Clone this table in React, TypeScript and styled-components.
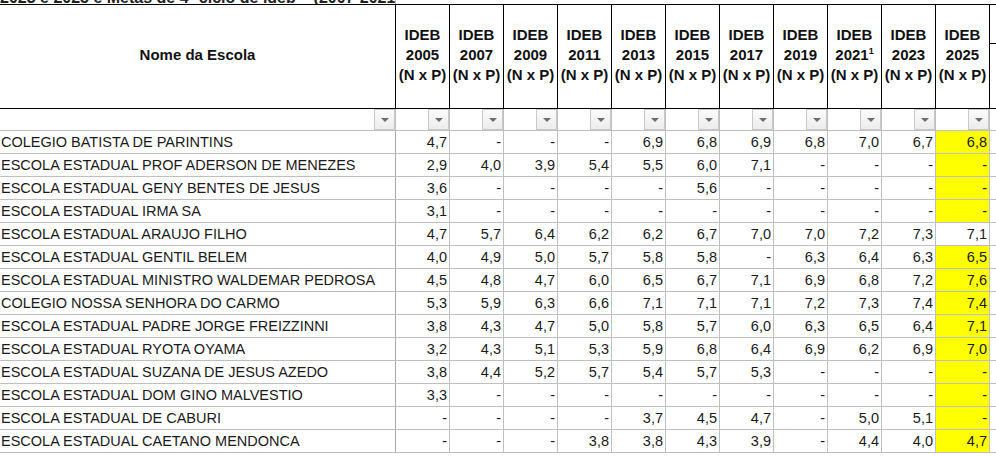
import React from "react";
import styled, { createGlobalStyle } from "styled-components";

const GlobalStyle = createGlobalStyle`
  html, body {
    margin: 0;
    padding: 0;
    background: #ffffff;
    overflow: hidden;
  }
  body {
    font-family: "Liberation Sans", Arial, sans-serif;
  }
`;

const YEARS = ["2005", "2007", "2009", "2011", "2013", "2015", "2017", "2019", "2021", "2023", "2025"];

type Row = { name: string; values: string[]; hl: boolean };

const ROWS: Row[] = [
  { name: "COLEGIO BATISTA DE PARINTINS", values: ["4,7", "-", "-", "-", "6,9", "6,8", "6,9", "6,8", "7,0", "6,7", "6,8"], hl: true },
  { name: "ESCOLA ESTADUAL PROF ADERSON DE MENEZES", values: ["2,9", "4,0", "3,9", "5,4", "5,5", "6,0", "7,1", "-", "-", "-", "-"], hl: true },
  { name: "ESCOLA ESTADUAL GENY BENTES DE JESUS", values: ["3,6", "-", "-", "-", "-", "5,6", "-", "-", "-", "-", "-"], hl: true },
  { name: "ESCOLA ESTADUAL IRMA SA", values: ["3,1", "-", "-", "-", "-", "-", "-", "-", "-", "-", "-"], hl: true },
  { name: "ESCOLA ESTADUAL ARAUJO FILHO", values: ["4,7", "5,7", "6,4", "6,2", "6,2", "6,7", "7,0", "7,0", "7,2", "7,3", "7,1"], hl: false },
  { name: "ESCOLA ESTADUAL GENTIL BELEM", values: ["4,0", "4,9", "5,0", "5,7", "5,8", "5,8", "-", "6,3", "6,4", "6,3", "6,5"], hl: true },
  { name: "ESCOLA ESTADUAL MINISTRO WALDEMAR PEDROSA", values: ["4,5", "4,8", "4,7", "6,0", "6,5", "6,7", "7,1", "6,9", "6,8", "7,2", "7,6"], hl: true },
  { name: "COLEGIO NOSSA SENHORA DO CARMO", values: ["5,3", "5,9", "6,3", "6,6", "7,1", "7,1", "7,1", "7,2", "7,3", "7,4", "7,4"], hl: true },
  { name: "ESCOLA ESTADUAL PADRE JORGE FREIZZINNI", values: ["3,8", "4,3", "4,7", "5,0", "5,8", "5,7", "6,0", "6,3", "6,5", "6,4", "7,1"], hl: true },
  { name: "ESCOLA ESTADUAL RYOTA OYAMA", values: ["3,2", "4,3", "5,1", "5,3", "5,9", "6,8", "6,4", "6,9", "6,2", "6,9", "7,0"], hl: true },
  { name: "ESCOLA ESTADUAL SUZANA DE JESUS AZEDO", values: ["3,8", "4,4", "5,2", "5,7", "5,4", "5,7", "5,3", "-", "-", "-", "-"], hl: true },
  { name: "ESCOLA ESTADUAL DOM GINO MALVESTIO", values: ["3,3", "-", "-", "-", "-", "-", "-", "-", "-", "-", "-"], hl: true },
  { name: "ESCOLA ESTADUAL DE CABURI", values: ["-", "-", "-", "-", "3,7", "4,5", "4,7", "-", "5,0", "5,1", "-"], hl: true },
  { name: "ESCOLA ESTADUAL CAETANO MENDONCA", values: ["-", "-", "-", "3,8", "3,8", "4,3", "3,9", "-", "4,4", "4,0", "4,7"], hl: true },
];

const GRID = "#bfbfbf";

const Sheet = styled.div`
  display: grid;
  grid-template-columns: 396px repeat(11, 54px) 1fr;
  grid-template-rows: 4px 105px 22px repeat(14, 23px) 1fr;
  width: 996px;
  height: 457px;
  overflow: hidden;
  color: #1a1a1a;
  font-family: "Liberation Sans", Arial, sans-serif;
`;

const TitleCell = styled.div<{ $wide?: boolean }>`
  box-sizing: border-box;
  overflow: hidden;
  display: flex;
  align-items: flex-end;
  border-right: ${(p) => (p.$wide ? "none" : `1px solid ${GRID}`)};
  grid-column: ${(p) => (p.$wide ? "2 / -1" : "auto")};
`;

const TitleText = styled.span`
  font-size: 16px;
  font-weight: bold;
  line-height: 16px;
  white-space: nowrap;
  color: #222;
  margin-bottom: -1.5px;
`;

const HeadCell = styled.div`
  box-sizing: border-box;
  border-top: 1px solid #000;
  border-right: 1px solid #000;
  border-bottom: 1px solid #000;
  display: flex;
  align-items: center;
  justify-content: center;
  text-align: center;
  font-size: 15px;
  font-weight: bold;
  line-height: 20px;
  color: #111;
  padding-bottom: 3px;
  white-space: nowrap;
`;

const Sup = styled.sup`
  font-size: 9px;
  vertical-align: super;
  line-height: 1;
`;

const TailHead = styled.div`
  box-sizing: border-box;
  border-top: 1px solid #000;
  border-bottom: 1px solid #000;
  display: flex;
  flex-direction: column;
`;

const TailTop = styled.div`
  height: 38px;
  border-bottom: 1px solid #000;
`;

const FilterCell = styled.div`
  box-sizing: border-box;
  border-right: 1px solid ${GRID};
  border-bottom: 1px solid ${GRID};
  display: flex;
  justify-content: flex-end;
  align-items: stretch;
`;

const FilterButton = styled.div`
  box-sizing: border-box;
  width: 21px;
  border: 1px solid #c9c9c9;
  background: linear-gradient(#fbfbfb, #ececec);
  display: flex;
  align-items: center;
  justify-content: center;
`;

const Arrow = styled.span`
  width: 0;
  height: 0;
  border-left: 4px solid transparent;
  border-right: 4px solid transparent;
  border-top: 4px solid #6e6e6e;
  margin-top: 1px;
`;

const NameCell = styled.div`
  box-sizing: border-box;
  border-right: 1px solid #a9a9a9;
  border-bottom: 1px solid ${GRID};
  font-size: 14.5px;
  line-height: 22px;
  padding-left: 1px;
  white-space: nowrap;
  overflow: hidden;
`;

const ValueCell = styled.div<{ $hl?: boolean }>`
  box-sizing: border-box;
  border-right: 1px solid ${GRID};
  border-bottom: 1px solid ${GRID};
  background: ${(p) => (p.$hl ? "#ffff00" : "transparent")};
  font-size: 14.5px;
  line-height: 22px;
  text-align: right;
  padding-right: 2px;
  white-space: nowrap;
`;

const TailCell = styled.div`
  box-sizing: border-box;
  border-bottom: 1px solid ${GRID};
`;

const Blank = styled.div``;

export default function App() {
  return (
    <>
      <GlobalStyle />
      <Sheet>
        <TitleCell>
          <TitleText>2023 e 2025 e Metas de 4º ciclo de ideb – (2007-2021)</TitleText>
        </TitleCell>
        <TitleCell $wide />

        <HeadCell>Nome da Escola</HeadCell>
        {YEARS.map((y) => (
          <HeadCell key={y}>
            <div>
              IDEB
              <br />
              {y}
              {y === "2021" && <Sup>1</Sup>}
              <br />
              (N x P)
            </div>
          </HeadCell>
        ))}
        <TailHead>
          <TailTop />
        </TailHead>

        {["name", ...YEARS].map((k) => (
          <FilterCell key={`f-${k}`}>
            <FilterButton>
              <Arrow />
            </FilterButton>
          </FilterCell>
        ))}
        <TailCell />

        {ROWS.map((r) => (
          <React.Fragment key={r.name}>
            <NameCell>{r.name}</NameCell>
            {r.values.map((v, i) => (
              <ValueCell key={i} $hl={r.hl && i === 10}>
                {v}
              </ValueCell>
            ))}
            <TailCell />
          </React.Fragment>
        ))}
        <Blank />
      </Sheet>
    </>
  );
}
